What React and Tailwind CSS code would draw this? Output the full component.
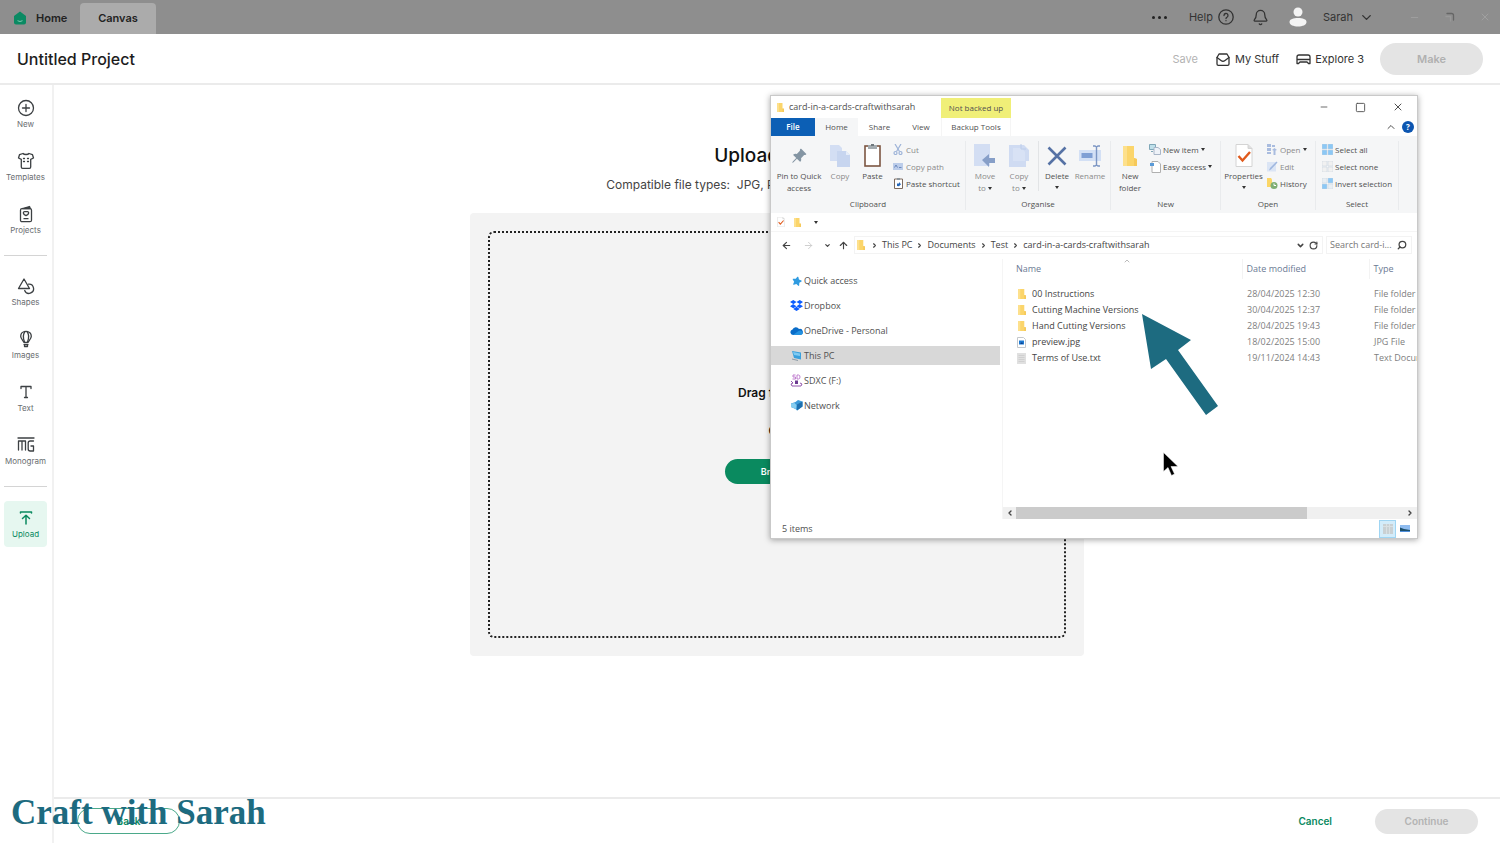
import React from 'react';
import {
  ArrowLeft, ArrowRight, ArrowUp, Bell, ChevronDown, ChevronLeft, ChevronRight,
  ChevronUp, Minus, RotateCw, Search, Square, X
} from 'lucide-react';
import { BsPinAngleFill } from 'react-icons/bs';
import { FaDropbox, FaStar } from 'react-icons/fa';

const stroke = {
  fill: 'none',
  stroke: 'currentColor',
  strokeWidth: 1.3,
  strokeLinecap: 'round',
  strokeLinejoin: 'round'
};

/* ---------- Design app icons ---------- */

const HomeIcon = () => (
  <svg className="w-3.5 h-3.5" viewBox="0 0 14 14">
    <path d="M7 .5 13 5v6.500a2 2 0 0 1-2 2H3a2 2 0 0 1-2-2V5z" fill="#0a8a63" />
    <path d="M4.500 9.700q2.500 1.600 5 0" fill="none" stroke="#7fc9b0" strokeWidth="1" />
  </svg>
);

const HelpIcon = () => (
  <svg className="w-4 h-4" viewBox="0 0 16 16" {...stroke}>
    <circle cx="8" cy="8" r="7.200" />
    <path d="M6 6.500a2 2 0 1 1 3 1.700c-.7.400-1 .7-1 1.400M8 11.600v.1" />
  </svg>
);

const AvatarIcon = () => (
  <svg className="w-[18px] h-5" viewBox="0 0 18 20" fill="#f4f4f4">
    <circle cx="9" cy="5" r="4.500" />
    <path d="M.5 15c0-3 4-4 8.500-4s8.500 1 8.500 4-4 4.500-8.500 4.500S.5 18 .5 15z" />
  </svg>
);

const InboxIcon = () => (
  <svg className="w-[14px] h-[13px]" viewBox="0 0 14 13" {...stroke}>
    <path d="M1 4.500 3 1h8l2 3.500V11a1.300 1.300 0 0 1-1.300 1.300H2.300A1.300 1.300 0 0 1 1 11z" />
    <path d="M1 4.500 5 7.500q2 1.500 4 0l4-3" />
  </svg>
);

const MachineIcon = () => (
  <svg className="w-[15px] h-[11px]" viewBox="0 0 15 11" {...stroke}>
    <path d="M1 5.500V3a2 2 0 0 1 2-2h9a2 2 0 0 1 2 2v2.500zM1 5.500v4h1.500L4 8h7l1.500 1.500H14v-4" />
  </svg>
);

const NewIcon = () => (
  <svg className="w-[18px] h-[18px]" viewBox="0 0 18 18" {...stroke}>
    <circle cx="9" cy="9" r="7.500" />
    <path d="M9 5.500v7M5.500 9h7" />
  </svg>
);

const ShirtIcon = () => (
  <svg className="w-[18px] h-[18px]" viewBox="0 0 18 18" {...stroke}>
    <path d="M6 1.500c1 1.300 5 1.300 6 0l3.500 1.200 1 3.300-2.800 1.300V15a1.300 1.300 0 0 1-1.300 1.300H5.600A1.300 1.300 0 0 1 4.300 15V7.300L1.500 6l1-3.300z" />
    <path d="M6.500 6.500h1M10.500 6.500h1M6.500 9.500h1M10.500 9.500h1" />
  </svg>
);

const ProjectsIcon = () => (
  <svg className="w-[18px] h-[18px]" viewBox="0 0 18 18" {...stroke}>
    <rect x="3.500" y="3.700" width="11" height="13" rx="1.500" />
    <path d="M5.500 3.500 12.500 1.500l.8 2z" fill="currentColor" />
    <path d="M9 10.700C5.500 9 6 6.700 7.500 6.700h3C12 6.700 12.500 9 9 10.700zM7 13.700h4" />
  </svg>
);

const ShapesIcon = () => (
  <svg className="w-[18px] h-[18px]" viewBox="0 0 18 18" {...stroke}>
    <path d="M7 2 12.500 11.500h-11z" />
    <path d="M11.500 7.200a4.600 4.600 0 1 1-3.800 6.300" />
  </svg>
);

const BalloonIcon = () => (
  <svg className="w-[18px] h-[18px]" viewBox="0 0 18 18" {...stroke}>
    <path d="M9 1.300c3.300 0 5.300 2.300 5.300 5 0 2.500-2 4-3.300 6H7c-1.300-2-3.300-3.500-3.300-6 0-2.700 2-5 5.300-5z" />
    <path d="M7.500 12C6 8 6 4 8 1.500M10.500 12C12 8 12 4 10 1.500M7 14.300h4M7.500 16.500h3v-2h-3z" />
  </svg>
);

const TextIcon = () => (
  <svg className="w-[18px] h-[18px]" viewBox="0 0 18 18" {...stroke}>
    <path d="M4 5.500V3.500h10v2M9 3.500v11M7.500 14.500h3" />
  </svg>
);

const MonogramIcon = () => (
  <svg className="w-[18px] h-[18px]" viewBox="0 0 18 18" {...stroke}>
    <path d="M1 2h16M1.500 14V5h7v9M5 5v9M16.500 5h-3.300a2 2 0 0 0-2 2v6a2 2 0 0 0 2 2h3.300V10h-2.500" />
  </svg>
);

const UploadIcon = () => (
  <svg className="w-[18px] h-[18px]" viewBox="0 0 18 18" {...stroke} strokeWidth={1.5}>
    <path d="M3.500 4V3h11v1M9 15V6.500M5.500 9.500 9 6.300l3.500 3.200" />
  </svg>
);

/* ---------- Explorer icons ---------- */

const FolderIcon = ({ className = 'w-2 h-[10px]' }) => (
  <svg className={className} viewBox="0 0 14 20" preserveAspectRatio="none">
    <path d="M0 0h11v12l3 1v7H0z" fill="#fbd56b" />
    <path d="M0 0h4v20H0z" fill="#fde08c" />
    <path d="M11 12l3 1v7h-3z" fill="#f6c95a" />
  </svg>
);

const CheckDocIcon = ({ className }) => (
  <svg className={className} viewBox="0 0 18 23">
    <path d="M1 .5h12l4 4v18H1z" fill="#fff" stroke="#d4d4d4" />
    <path d="M13 .5v4h4" fill="#ddd" stroke="#d4d4d4" />
    <path d="m3.500 12 4 4.500L15 8" fill="none" stroke="#e05a1c" strokeWidth="2.400" />
  </svg>
);

const CopyIcon = () => (
  <svg className="w-5 h-[22px]" viewBox="0 0 20 22">
    <path d="M0 0h9l3 3v13H0z" fill="#d3def3" />
    <path d="M7 6h9l4 4v12H7z" fill="#c7d5ef" />
    <path d="M16 6v4h4z" fill="#e6edf9" />
  </svg>
);

const PasteIcon = () => (
  <svg className="w-[17px] h-[23px]" viewBox="0 0 17 23">
    <rect x="1" y="2" width="15" height="20" fill="#fff" stroke="#7c5541" strokeWidth="1.600" />
    <path d="M4 1h9v4H4z" fill="#a3abb0" />
    <path d="M7 0h3v2H7z" fill="#6e777c" />
  </svg>
);

const MoveIcon = () => (
  <svg className="w-[22px] h-6" viewBox="0 0 22 24">
    <path d="M0 0h16v22H0z" fill="#d3def3" />
    <path d="m8 16 7-6v4h6v5h-6v4z" fill="#879fc8" />
  </svg>
);

const CopyToIcon = () => (
  <svg className="w-[22px] h-6" viewBox="0 0 22 24">
    <path d="M1 1h15l5 5v11h-3v6H1z" fill="#cfdbf2" />
    <path d="M5 4h9l3 4v9H5z" fill="#d8e2f5" />
    <path d="M13 0v5h5" fill="none" stroke="#bccce9" />
  </svg>
);

const DeleteIcon = () => (
  <svg className="w-5 h-5" viewBox="0 0 20 20">
    <path d="M1.500 1.500 18.500 18.500M18.500 1.500 1.500 18.500" stroke="#5672a5" strokeWidth="2.600" />
  </svg>
);

const RenameIcon = () => (
  <svg className="w-[23px] h-[22px]" viewBox="0 0 23 22">
    <path d="M0 5h22v11H0z" fill="#d3e0f5" />
    <path d="M2.500 8h11v5h-11z" fill="#7f9fd4" />
    <path d="M14 1h2l1.500 1L19 1h2M17.500 2v18M14 21h2l1.500-1 1.500 1h2" fill="none" stroke="#7b95c3" strokeWidth="1.400" />
  </svg>
);

const CutIcon = () => (
  <svg className="w-[10px] h-[11px]" viewBox="0 0 10 11" fill="none" stroke="#9db3d8" strokeWidth="1.200">
    <path d="M2 0l4.500 7.500M8 0 3.500 7.500" />
    <circle cx="2.500" cy="9" r="1.500" />
    <circle cx="7.500" cy="9" r="1.500" />
  </svg>
);

const CopyPathIcon = () => (
  <svg className="w-[10px] h-[7px]" viewBox="0 0 10 7">
    <path d="M0 0h10v7H0z" fill="#bccdea" />
    <path d="M1.500 4.500 3 2l1.500 2.500M6 4.500h2.500" fill="none" stroke="#6a88bd" />
  </svg>
);

const ShortcutIcon = () => (
  <svg className="w-[9px] h-[11px]" viewBox="0 0 9 11">
    <path d="M.5 1h8v9.500h-8z" fill="#fff" stroke="#7c6a5e" />
    <path d="M3 0h3v2H3z" fill="#8d969c" />
    <path d="M3 8V5.500h2V4l2 2.200L5 8.200z" fill="#2667b8" />
  </svg>
);

const NewItemIcon = () => (
  <svg className="w-3 h-[11px]" viewBox="0 0 12 11">
    <path d="M.5.500h6v5h-6z" fill="#bfe0ea" stroke="#7fa7b8" />
    <path d="M5 3.500h4l2.500 2v5H5z" fill="#eef2f8" stroke="#a9b6c8" />
    <path d="M2 7.500h2" stroke="#7fa7b8" />
  </svg>
);

const EasyAccessIcon = () => (
  <svg className="w-[11px] h-3" viewBox="0 0 11 12">
    <path d="M2 .5h6l2.500 2.500v8.500H2z" fill="#fff" stroke="#b0b0b0" />
    <path d="M0 2h4v3H0z" fill="#5b9bd8" />
  </svg>
);

const OpenIcon = () => (
  <svg className="w-[10px] h-[11px]" viewBox="0 0 10 11" fill="#a9bcdf">
    <path d="M0 0h4v3H0zM0 4h4v3H0zM0 8h4v2H0zM5 1h3v2H5zM5 6l2.500-2L10 6 8.500 6.500V11h-2V6.500z" />
  </svg>
);

const EditIcon = () => (
  <svg className="w-[11px] h-[11px]" viewBox="0 0 11 11">
    <path d="M0 1h9v9.500H0z" fill="#dbe5f5" />
    <path d="M2 9.500 3 7l6.500-6.500 1 1L4 8.500z" fill="#9fb7df" />
  </svg>
);

const HistoryIcon = () => (
  <svg className="w-[11px] h-[11px]" viewBox="0 0 11 11">
    <path d="M0 0h4l1 1.500V9H0z" fill="#fbd667" />
    <circle cx="7" cy="7.500" r="3.500" fill="#7fae75" />
    <path d="M7 5.500v2h2" fill="none" stroke="#fff" />
  </svg>
);

const SelectIcon = ({ on = '#8cc8f5', off = '#8cc8f5' }) => (
  <svg className="w-[11px] h-[11px]" viewBox="0 0 11 11" stroke="#c5d3de" strokeWidth=".5">
    <path d="M0 0h5v5H0zM6 6h5v5H6z" fill={off} />
    <path d="M6 0h5v5H6zM0 6h5v5H0z" fill={on} />
  </svg>
);

const CloudIcon = () => (
  <svg className="w-[13px] h-2" viewBox="0 0 13 8">
    <path d="M3 8A2.800 2.800 0 0 1 2.500 2.500 3.600 3.600 0 0 1 9 2a3 3 0 0 1 1.500 6z" fill="#0a6cc8" />
    <path d="M3 8 8.500 4a3 3 0 0 1 4 1.500A2 2 0 0 1 11 8z" fill="#2492e0" />
  </svg>
);

const ComputerIcon = () => (
  <svg className="w-[11px] h-[10px]" viewBox="0 0 11 10">
    <path d="M1 0l9 1.500V8.500L3 7z" fill="#3aa0dc" />
    <path d="M2 1l7 1.500V5L3 4z" fill="#7fcaf2" />
    <path d="M1 8l6 1.500" stroke="#8b9aa5" />
  </svg>
);

const CardIcon = () => (
  <svg className="w-[13px] h-[13px]" viewBox="0 0 13 13" fill="none">
    <path d="M5.500 1H3v2h2.500v2H2.500M7 1v4h1.500Q10 5 10 3T8.500 1z" stroke="#c07fcf" />
    <path d="M1 7l2 2-2 1 1 2h9l1-2-2-1" stroke="#9356ac" />
    <path d="M5 6.500h3V10H5z" fill="#6c3a91" />
  </svg>
);

const NetworkIcon = () => (
  <svg className="w-3 h-[11px]" viewBox="0 0 12 11">
    <path d="M0 3.500 4.500 2 7 0l4.500 1.500v5L6 10.500 4.500 9 0 7z" fill="#3d9bd9" />
    <path d="M0 3.500l3.500-.5 2 2L5 9 0 7z" fill="#86cdf0" />
    <path d="M6 4.500l5.500-3v5L6 10.500z" fill="#1f6fae" />
  </svg>
);

const ImageFileIcon = () => (
  <svg className="w-[9px] h-[11px]" viewBox="0 0 9 11">
    <path d="M.5.500h6l2 2v8h-8z" fill="#fff" stroke="#c4c8cc" />
    <path d="M2 3.500h5v4H2z" fill="#1c78d0" />
    <path d="M3 7l2-2 1 2z" fill="#0e3f8c" />
  </svg>
);

const TextFileIcon = () => (
  <svg className="w-[9px] h-[11px]" viewBox="0 0 9 11">
    <path d="M0 0h9v11H0z" fill="#e0e0e0" />
    <path d="M1.500 2.500h6M1.500 4.500h6M1.500 6.500h6M1.500 8.500h6" stroke="#d0d0d0" />
  </svg>
);

const Caret = () => (
  <svg className="inline-block w-1 h-[3px]" viewBox="0 0 4 3">
    <path d="M0 0h4L2 3z" fill="#333" />
  </svg>
);

/* ---------- Data ---------- */

const createTools = [
  { label: 'New', Icon: NewIcon },
  { label: 'Templates', Icon: ShirtIcon },
  { label: 'Projects', Icon: ProjectsIcon }
];

const designTools = [
  { label: 'Shapes', Icon: ShapesIcon },
  { label: 'Images', Icon: BalloonIcon },
  { label: 'Text', Icon: TextIcon },
  { label: 'Monogram', Icon: MonogramIcon }
];

const places = [
  { label: 'Quick access', icon: <FaStar className="w-[10px] h-[10px] text-[#2f9be0] rotate-12" /> },
  { label: 'Dropbox', icon: <FaDropbox className="w-[13px] h-[13px] text-[#0b5cff]" /> },
  { label: 'OneDrive - Personal', icon: <CloudIcon /> },
  { label: 'This PC', icon: <ComputerIcon />, active: true },
  { label: 'SDXC (F:)', icon: <CardIcon /> },
  { label: 'Network', icon: <NetworkIcon /> }
];

const files = [
  { name: '00 Instructions', date: '28/04/2025 12:30', type: 'File folder', icon: <FolderIcon /> },
  { name: 'Cutting Machine Versions', date: '30/04/2025 12:37', type: 'File folder', icon: <FolderIcon /> },
  { name: 'Hand Cutting Versions', date: '28/04/2025 19:43', type: 'File folder', icon: <FolderIcon /> },
  { name: 'preview.jpg', date: '18/02/2025 15:00', type: 'JPG File', icon: <ImageFileIcon /> },
  { name: 'Terms of Use.txt', date: '19/11/2024 14:43', type: 'Text Document', icon: <TextFileIcon /> }
];

const breadcrumbs = ['This PC', 'Documents', 'Test', 'card-in-a-cards-craftwithsarah'];

/* ---------- Design app ---------- */

const ToolButton = ({ label, Icon }) => (
  <button className="h-[53px] w-full flex flex-col items-center justify-center gap-px text-[#3c4043]">
    <Icon />
    <span className="text-[8px] leading-3 text-[#6a6e71]">{label}</span>
  </button>
);

const TitleBar = () => (
  <div className="h-[34px] bg-[#8e8e8e] flex items-end justify-between text-[#222]">
    <div className="flex items-end text-[11px] font-semibold">
      <button className="h-8 w-20 pl-[13px] flex items-center gap-[9px]">
        <HomeIcon />
        Home
      </button>
      <button className="h-[31px] w-[76px] rounded-t bg-[#ababab]">Canvas</button>
    </div>
    <div className="h-full flex items-center text-[11px] text-[#333]">
      <button aria-label="More" className="mr-[22px] flex gap-[3px]">
        <span className="w-[3px] h-[3px] rounded-full bg-[#222]" />
        <span className="w-[3px] h-[3px] rounded-full bg-[#222]" />
        <span className="w-[3px] h-[3px] rounded-full bg-[#222]" />
      </button>
      <button className="mr-[18px] flex items-center gap-[5px]">Help <HelpIcon /></button>
      <button aria-label="Notifications" className="mr-5"><Bell size={17} strokeWidth={1.8} /></button>
      <button className="flex items-center">
        <AvatarIcon />
        <span className="ml-4 mr-[6px]">Sarah</span>
        <ChevronDown size={15} strokeWidth={2.2} />
      </button>
      <div className="ml-[35px] mr-[9px] flex items-center gap-6 text-[#a0a0a0]">
        <button aria-label="Minimise"><Minus size={11} /></button>
        <button aria-label="Restore">
          <svg className="w-[11px] h-[11px] text-[#666]" viewBox="0 0 11 11" {...stroke}>
            <path d="M3 1.500h4.500a2 2 0 0 1 2 2V8" />
            <path d="M2 4.500h4.500V9" stroke="#999" />
          </svg>
        </button>
        <button aria-label="Close"><X size={12} /></button>
      </div>
    </div>
  </div>
);

const ProjectHeader = () => (
  <header className="h-[51px] pl-[17px] pr-[17px] flex items-center justify-between border-b-2 border-[#ebebeb]">
    <h1 className="pt-px text-[16px] font-medium text-[#1d1d1d]">Untitled Project</h1>
    <div className="pt-px flex items-center text-[11px] text-[#333]">
      <button className="mr-[18px] text-[#b3b3b3]">Save</button>
      <button className="mr-[17px] flex items-center gap-[5px]"><InboxIcon />My Stuff</button>
      <button className="mr-4 flex items-center gap-1"><MachineIcon />Explore 3</button>
      <button className="w-[103px] h-8 rounded-full bg-[#e4e4e4] text-[#b0b0b0] font-semibold">Make</button>
    </div>
  </header>
);

const UploadArea = () => (
  <div className="flex-1 pt-[59px] flex flex-col items-center">
    <h2 className="text-[19px] leading-6 font-medium text-[#111]">Upload Image</h2>
    <p className="mt-[9px] text-[12px] leading-4 text-[#444]">
      Compatible file types: &nbsp;JPG, PNG, SVG, DXF, HEIC, GIF, BMP
    </p>
    <div className="mt-5 w-[614px] max-w-full h-[443px] p-[18px] rounded bg-[#f3f3f3]">
      <div className="h-full rounded-md border-2 border-dotted border-[#222] flex flex-col items-center justify-center text-[#111]">
        <p className="text-[12px] leading-4 font-semibold">Drag file here</p>
        <p className="mt-[22px] text-[12px] leading-4 font-semibold">OR</p>
        <button className="mt-5 w-[104px] h-[25px] rounded-full bg-[#0a8a5f] text-white text-[9px] font-semibold">Browse</button>
      </div>
    </div>
  </div>
);

const Footer = () => (
  <footer className="h-[46px] pl-[23px] pr-[22px] flex items-center justify-between border-t-2 border-[#ebebeb] text-[10px] font-semibold">
    <button className="w-[103px] h-[26px] rounded-full border border-[#4ba98a] text-[#0a8a5f]">Back</button>
    <div className="flex items-center gap-[43px]">
      <button className="text-[#0a8a5f]">Cancel</button>
      <button className="w-[103px] h-[25px] rounded-full bg-[#e4e4e4] text-[#b3b3b3]">Continue</button>
    </div>
  </footer>
);

/* ---------- Explorer window ---------- */

const RibbonGroup = ({ label, className, children }) => (
  <div className={`shrink-0 border-r border-[#e9ebed] flex flex-col justify-between ${className}`}>
    <div className="flex items-start">{children}</div>
    <div className="text-center leading-3">{label}</div>
  </div>
);

const BigButton = ({ icon, label, className, caret, disabled }) => (
  <button className={`shrink-0 flex flex-col items-center leading-3 ${className} ${disabled ? 'text-[#8a8a8a]' : ''}`}>
    <span className="h-[29px] flex items-center">{icon}</span>
    <span>{label}</span>
    {caret && <span className="h-[10px] flex items-center"><Caret /></span>}
  </button>
);

const SmallButton = ({ icon, label, caret, disabled }) => (
  <button className={`h-[17px] flex items-center gap-[2px] whitespace-nowrap ${disabled ? 'text-[#8a8a8a]' : ''}`}>
    <span className="w-3 flex justify-center">{icon}</span>
    {label}
    {caret && <Caret />}
  </button>
);

const Ribbon = () => (
  <div className="h-[77px] pt-[5px] pb-[3px] bg-[#f5f6f7] flex text-[8px] text-[#505050]">
    <RibbonGroup label="Clipboard" className="w-[195px]">
      <BigButton className="w-[56px]" icon={<BsPinAngleFill className="w-4 h-4 text-[#8495a3]" />} label={<>Pin to Quick<br />access</>} />
      <BigButton className="w-[26px]" icon={<CopyIcon />} label="Copy" disabled />
      <BigButton className="w-[39px]" icon={<PasteIcon />} label="Paste" />
      <div>
        <SmallButton icon={<CutIcon />} label="Cut" disabled />
        <SmallButton icon={<CopyPathIcon />} label="Copy path" disabled />
        <SmallButton icon={<ShortcutIcon />} label="Paste shortcut" />
      </div>
    </RibbonGroup>
    <RibbonGroup label="Organise" className="w-[145px]">
      <BigButton className="w-[38px]" icon={<MoveIcon />} label={<>Move<br />to <Caret /></>} disabled />
      <BigButton className="w-[30px]" icon={<CopyToIcon />} label={<>Copy<br />to <Caret /></>} disabled />
      <span className="ml-1 w-px h-[50px] bg-[#e2e4e6]" />
      <BigButton className="w-[36px]" icon={<DeleteIcon />} label="Delete" caret />
      <BigButton className="w-[30px]" icon={<RenameIcon />} label="Rename" disabled />
    </RibbonGroup>
    <RibbonGroup label="New" className="w-[110px]">
      <BigButton className="w-[38px]" icon={<FolderIcon className="w-[14px] h-5" />} label={<>New<br />folder</>} />
      <div>
        <SmallButton icon={<NewItemIcon />} label="New item" caret />
        <SmallButton icon={<EasyAccessIcon />} label="Easy access" caret />
      </div>
    </RibbonGroup>
    <RibbonGroup label="Open" className="w-[95px]">
      <BigButton className="w-[45px]" icon={<CheckDocIcon className="w-[18px] h-[23px]" />} label="Properties" caret />
      <div>
        <SmallButton icon={<OpenIcon />} label="Open" caret disabled />
        <SmallButton icon={<EditIcon />} label="Edit" disabled />
        <SmallButton icon={<HistoryIcon />} label="History" />
      </div>
    </RibbonGroup>
    <RibbonGroup label="Select" className="w-[83px]">
      <div className="pl-[5px]">
        <SmallButton icon={<SelectIcon />} label="Select all" />
        <SmallButton icon={<SelectIcon on="#f1f1f1" off="#f1f1f1" />} label="Select none" />
        <SmallButton icon={<SelectIcon off="#e8eef3" />} label="Invert selection" />
      </div>
    </RibbonGroup>
  </div>
);

const AddressBar = () => (
  <div className="h-[18px] mt-1 px-[5px] flex items-center text-[#444]">
    <button aria-label="Back" className="w-5 flex justify-center"><ArrowLeft size={11} strokeWidth={2.5} /></button>
    <button aria-label="Forward" className="w-6 flex justify-center text-[#ccc]"><ArrowRight size={11} /></button>
    <button aria-label="Recent" className="w-[14px] flex justify-center"><ChevronDown size={7} strokeWidth={4} /></button>
    <button aria-label="Up" className="w-[18px] flex justify-center"><ArrowUp size={11} strokeWidth={2.5} /></button>
    <div className="ml-[2px] flex-1 h-full pl-[2px] pr-1 border border-[#f3f3f3] flex items-center">
      <FolderIcon className="w-2 h-[10px] mr-[2px]" />
      {breadcrumbs.map((crumb) => (
        <React.Fragment key={crumb}>
          <ChevronRight size={7} strokeWidth={4} className="mx-[4px] shrink-0" />
          <button className="whitespace-nowrap">{crumb}</button>
        </React.Fragment>
      ))}
      <button aria-label="History" className="ml-auto mr-[4px]"><ChevronDown size={9} strokeWidth={4} /></button>
      <button aria-label="Refresh"><RotateCw size={9} strokeWidth={3} /></button>
    </div>
    <label className="ml-[3px] w-[86px] h-full pl-[3px] pr-1 border border-[#f3f3f3] flex items-center">
      <input aria-label="Search" placeholder="Search card-i..." className="min-w-0 flex-1 outline-none placeholder:text-[#777]" />
      <Search size={10} strokeWidth={3} className="-scale-x-100" />
    </label>
  </div>
);

const FileTable = () => (
  <div className="flex-1 min-w-0 flex flex-col border-l border-[#f5f5f5]">
    <div className="flex-1 overflow-hidden pl-[13px]">
      <table className="w-[431px] table-fixed text-left whitespace-nowrap">
        <thead className="text-[#6b7a94]">
          <tr className="h-5">
            <th className="w-[226px] p-0 font-normal">
              <span className="relative block">
                Name
                <ChevronUp size={8} className="absolute left-[107px] -top-[5px] text-[#999]" />
              </span>
            </th>
            <th className="w-[127px] p-0 pl-1 font-normal border-l border-[#f3f3f3]">Date modified</th>
            <th className="p-0 pl-1 font-normal border-l border-[#f3f3f3]">Type</th>
          </tr>
          <tr className="h-[7px]" aria-hidden="true"><td colSpan={3} className="p-0" /></tr>
        </thead>
        <tbody>
          {files.map((file) => (
            <tr key={file.name} className="h-4">
              <td className="p-0">
                <span className="flex items-center gap-[5px] leading-4 text-[#444]">
                  <span className="w-[11px] flex justify-center">{file.icon}</span>
                  {file.name}
                </span>
              </td>
              <td className="p-0 pl-[5px] leading-4 text-[#808080]">{file.date}</td>
              <td className="p-0 pl-[5px] leading-4 text-[#808080]">{file.type}</td>
            </tr>
          ))}
        </tbody>
      </table>
    </div>
    <div className="h-3 px-[3px] bg-[#f0f0f0] flex items-center text-[#444]">
      <ChevronLeft size={8} strokeWidth={4} />
      <div className="ml-[2px] w-[291px] h-full bg-[#cbcbcb]" />
      <ChevronRight size={8} strokeWidth={4} className="ml-auto" />
    </div>
  </div>
);

const ExplorerWindow = () => (
  <section className="absolute left-[770px] top-[95px] w-[648px] h-[444px] flex flex-col bg-white border border-[#c9c9c9] shadow-[0_1px_6px_rgba(0,0,0,0.35)] font-['Open_Sans','Noto_Sans',sans-serif] text-[9px] text-[#505050]">
    <div className="h-[22px] flex items-end justify-between">
      <div className="h-full flex items-end">
        <div className="h-[22px] w-[170px] pl-[6px] flex items-center gap-[5px]">
          <FolderIcon className="w-[7px] h-[9px]" />
          card-in-a-cards-craftwithsarah
        </div>
        <div className="h-[20px] w-[70px] bg-[#f0ef78] flex items-center justify-center text-[8px]">Not backed up</div>
      </div>
      <div className="h-full mr-[13px] flex items-center gap-[26px]">
        <button aria-label="Minimise"><Minus size={10} strokeWidth={2} /></button>
        <button aria-label="Maximise">
          <Square size={11} strokeWidth={2} strokeLinejoin="miter" rx={0} />
        </button>
        <button aria-label="Close"><X size={12} strokeWidth={2} /></button>
      </div>
    </div>
    <div className="h-[18px] flex text-[8px]">
      <button className="w-[44px] bg-[#0c5fb5] text-white font-semibold">File</button>
      <button className="w-[43px] bg-[#f5f6f7]">Home</button>
      <button className="w-[43px]">Share</button>
      <button className="w-[40px]">View</button>
      <button className="w-[70px] border-x border-[#f5f5f5]">Backup Tools</button>
      <div className="ml-auto mr-[3px] flex items-center gap-[5px]">
        <button aria-label="Collapse ribbon"><ChevronUp size={12} /></button>
        <button aria-label="Help" className="w-3 h-3 rounded-full bg-[#0c55b0] text-white text-[8px] leading-3 font-bold">?</button>
      </div>
    </div>
    <Ribbon />
    <div className="h-[19px] pl-[6px] flex items-center gap-[9px] border-b border-[#f5f5f5]">
      <CheckDocIcon className="w-2 h-[10px]" />
      <FolderIcon className="w-[7px] h-[9px]" />
      <span className="ml-1 leading-3"><Caret /></span>
    </div>
    <AddressBar />
    <div className="flex-1 min-h-0 mt-[5px] flex">
      <nav className="w-[231px] pt-3 pr-[2px]">
        {places.map((place) => (
          <a
            key={place.label}
            href="#"
            className={`h-[19px] mb-[6px] pl-[19px] flex items-center gap-[1px] ${place.active ? 'bg-[#d8d8d8]' : ''}`}
          >
            <span className="w-[13px] flex justify-center">{place.icon}</span>
            {place.label}
          </a>
        ))}
      </nav>
      <FileTable />
    </div>
    <div className="h-[19px] pl-[11px] pr-[7px] flex items-center">
      <span>5 items</span>
      <button aria-label="Details" className="ml-auto w-[17px] h-[18px] bg-[#d3ecfa] border border-[#9fd5f3] flex items-center justify-center">
        <svg className="w-[10px] h-[10px]" viewBox="0 0 10 10">
          <path d="M0 0h10v10H0z" fill="#c9d0d3" />
          <path d="M3.500 0v10M6.500 0v10M0 2.500h10" stroke="#d9e0e3" />
        </svg>
      </button>
      <button aria-label="Thumbnails" className="ml-1">
        <svg className="w-[10px] h-[7px]" viewBox="0 0 10 7">
          <path d="M0 0h10v7H0z" fill="#8fbcf0" />
          <path d="M0 2.500 4 4l6 1v1H0z" fill="#1d4f6b" />
          <path d="M0 6h10v1H0z" fill="#4f8fdc" />
        </svg>
      </button>
    </div>
  </section>
);

export default function App() {
  return (
    <div className="relative min-h-screen flex flex-col bg-white font-[Inter,'Liberation_Sans',sans-serif] overflow-hidden">
      <TitleBar />
      <ProjectHeader />
      <div className="flex-1 flex">
        <aside className="w-[54px] pt-[3px] pl-1 pr-[5px] border-r-2 border-[#f1f1f1]">
          {createTools.map((tool) => <ToolButton key={tool.label} {...tool} />)}
          <hr className="mt-2 mb-[10px] border-[#d4d4d4]" />
          {designTools.map((tool) => <ToolButton key={tool.label} {...tool} />)}
          <hr className="mt-2 mb-[14px] border-[#d4d4d4]" />
          <button className="w-full h-[46px] rounded bg-[#e6f7f0] text-[#0a8a5f] flex flex-col items-center justify-center gap-px">
            <UploadIcon />
            <span className="text-[8px] leading-3">Upload</span>
          </button>
        </aside>
        <main className="flex-1 flex flex-col">
          <UploadArea />
          <Footer />
        </main>
      </div>

      <ExplorerWindow />

      {/* Pointer arrow and mouse cursor */}
      <svg className="absolute left-[1142px] top-[314px] w-[76px] h-[101px]" viewBox="0 0 76 101">
        <path d="M0 0 49 26 36 36 76 92 64 101 24 45 9 55z" fill="#1d6b80" />
      </svg>
      <svg className="absolute left-[1163px] top-[452px] w-4 h-6" viewBox="0 0 16 24">
        <path d="M.5.500v19l4.500-4 3.500 8 3-1.500L8 14.500h7z" fill="#000" stroke="#fff" strokeWidth=".5" />
      </svg>

      {/* Watermark */}
      <div className="absolute left-[11px] bottom-[10px] font-['Liberation_Serif',serif] font-bold text-[35px] leading-10 text-[#1d6b80] whitespace-nowrap pointer-events-none">
        Craft with Sarah
      </div>
    </div>
  );
}
